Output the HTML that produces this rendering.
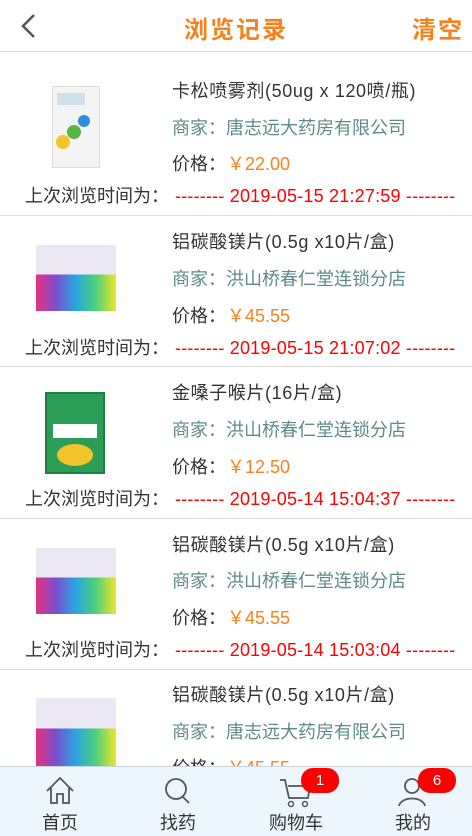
<!DOCTYPE html>
<html><head><meta charset="utf-8"><style>
*{margin:0;padding:0;box-sizing:border-box}
body{width:472px;height:836px;overflow:hidden;background:#fff;font-family:"Liberation Sans","Noto Sans CJK SC",sans-serif;position:relative;color:#333}
.hdr{position:absolute;top:0;left:0;width:472px;height:52px;border-bottom:1px solid #ddd;background:#fff}
.hdr .t{position:absolute;left:0;width:472px;text-align:center;top:10px;font-size:24px;font-weight:bold;color:#f7821b;letter-spacing:2px}
.hdr .c{position:absolute;right:8px;top:10px;font-size:24px;font-weight:bold;color:#f7821b;letter-spacing:2px}
.sep{position:absolute;left:0;width:472px;height:1px;background:#ddd}
.a{position:absolute;white-space:nowrap;line-height:22px}
.ti{font-size:18px;color:#333;left:172px;letter-spacing:0.6px}
.me{font-size:18px;color:#5f8a8b;left:172px}
.pr{font-size:18px;color:#333;left:172px}
.pr span{color:#f7821b;margin-left:1px}
.tm{font-size:18px;color:#333;left:25px}
.tm span{color:#f00;margin-left:6px;letter-spacing:0.2px}
.nav{position:absolute;top:766px;left:0;width:472px;height:70px;background:#eef6fd;border-top:1px solid #c8d4de}
.ni{position:absolute;top:42px;font-size:18px;color:#333;width:80px;text-align:center}
.badge{position:absolute;background:#f00;color:#fff;font-size:15px;border-radius:12px;width:38px;height:25px;text-align:center;line-height:25px}
.img{position:absolute}
</style></head><body>
<div class="hdr">
<svg style="position:absolute;left:18px;top:13px" width="22" height="26"><path d="M16 2 L5 13 L16 24" stroke="#555" stroke-width="2.5" fill="none"/></svg>
<div class="t">浏览记录</div><div class="c">清空</div></div>

<div class="img" style="left:52px;top:86px;width:48px;height:82px;background:#f4f4f4;border:1px solid #ddd">
<div style="position:absolute;left:3px;top:48px;width:14px;height:14px;border-radius:50%;background:#f2c32b"></div>
<div style="position:absolute;left:14px;top:38px;width:14px;height:14px;border-radius:50%;background:#58b548"></div>
<div style="position:absolute;left:25px;top:28px;width:12px;height:12px;border-radius:50%;background:#2b8fd9"></div>
<div style="position:absolute;left:4px;top:6px;width:28px;height:12px;background:#cfe0ea"></div></div>
<div class="a ti" style="top:80px">卡松喷雾剂(50ug x 120喷/瓶)</div>
<div class="a me" style="top:117px">商家：唐志远大药房有限公司</div>
<div class="a pr" style="top:153px">价格：<span>￥22.00</span></div>
<div class="a tm" style="top:185px">上次浏览时间为：<span>-------- 2019-05-15 21:27:59 --------</span></div>
<div class="sep" style="top:215px"></div>

<div class="img" style="left:36px;top:245px;width:80px;height:66px;background:linear-gradient(#ebe8f4 0 45%,transparent 45%),linear-gradient(90deg,#e8317a,#7a4fd0,#2aa6e0,#4fd07a,#f0e52a)"></div>
<div class="a ti" style="top:231px">铝碳酸镁片(0.5g x10片/盒)</div>
<div class="a me" style="top:268px">商家：洪山桥春仁堂连锁分店</div>
<div class="a pr" style="top:305px">价格：<span>￥45.55</span></div>
<div class="a tm" style="top:337px">上次浏览时间为：<span>-------- 2019-05-15 21:07:02 --------</span></div>
<div class="sep" style="top:366px"></div>

<div class="img" style="left:45px;top:392px;width:60px;height:82px;background:#2c9d57;border:2px solid #1f7e44">
<div style="position:absolute;left:6px;top:30px;width:44px;height:14px;background:#fff"></div>
<div style="position:absolute;left:10px;top:50px;width:36px;height:22px;border-radius:50%;background:#f2c32b"></div></div>
<div class="a ti" style="top:382px">金嗓子喉片(16片/盒)</div>
<div class="a me" style="top:419px">商家：洪山桥春仁堂连锁分店</div>
<div class="a pr" style="top:456px">价格：<span>￥12.50</span></div>
<div class="a tm" style="top:488px">上次浏览时间为：<span>-------- 2019-05-14 15:04:37 --------</span></div>
<div class="sep" style="top:518px"></div>

<div class="img" style="left:36px;top:548px;width:80px;height:66px;background:linear-gradient(#ebe8f4 0 45%,transparent 45%),linear-gradient(90deg,#e8317a,#7a4fd0,#2aa6e0,#4fd07a,#f0e52a)"></div>
<div class="a ti" style="top:534px">铝碳酸镁片(0.5g x10片/盒)</div>
<div class="a me" style="top:570px">商家：洪山桥春仁堂连锁分店</div>
<div class="a pr" style="top:607px">价格：<span>￥45.55</span></div>
<div class="a tm" style="top:639px">上次浏览时间为：<span>-------- 2019-05-14 15:03:04 --------</span></div>
<div class="sep" style="top:669px"></div>

<div class="img" style="left:36px;top:698px;width:80px;height:68px;background:linear-gradient(#ebe8f4 0 45%,transparent 45%),linear-gradient(90deg,#e8317a,#7a4fd0,#2aa6e0,#4fd07a,#f0e52a)"></div>
<div class="a ti" style="top:684px">铝碳酸镁片(0.5g x10片/盒)</div>
<div class="a me" style="top:721px">商家：唐志远大药房有限公司</div>
<div class="a pr" style="top:757px">价格：<span>￥45.55</span></div>

<div class="nav">
<svg style="position:absolute;left:44px;top:9px" width="32" height="30"><path d="M3 15 L16 2 L29 15 M7 12 V27 H13 V18 H19 V27 H25 V12" stroke="#555" stroke-width="1.8" fill="none"/></svg>
<svg style="position:absolute;left:162px;top:9px" width="32" height="30"><circle cx="14" cy="13" r="10" stroke="#555" stroke-width="1.8" fill="none"/><path d="M21 21 L27 27" stroke="#555" stroke-width="1.8"/></svg>
<svg style="position:absolute;left:278px;top:9px" width="36" height="32"><path d="M2 4 H7 L11 22 H30 L32 10 H10" stroke="#555" stroke-width="1.8" fill="none"/><circle cx="13" cy="28" r="2.5" stroke="#555" stroke-width="1.5" fill="none"/><circle cx="27" cy="28" r="2.5" stroke="#555" stroke-width="1.5" fill="none"/></svg>
<svg style="position:absolute;left:396px;top:9px" width="32" height="32"><circle cx="16" cy="10" r="7" stroke="#555" stroke-width="1.8" fill="none"/><path d="M3 30 C5 20 27 20 29 30" stroke="#555" stroke-width="1.8" fill="none"/></svg>
<div class="badge" style="left:301px;top:1px">1</div>
<div class="badge" style="left:418px;top:1px">6</div>
<div class="ni" style="left:20px">首页</div>
<div class="ni" style="left:138px">找药</div>
<div class="ni" style="left:256px">购物车</div>
<div class="ni" style="left:373px">我的</div>
</div>
</body></html>
